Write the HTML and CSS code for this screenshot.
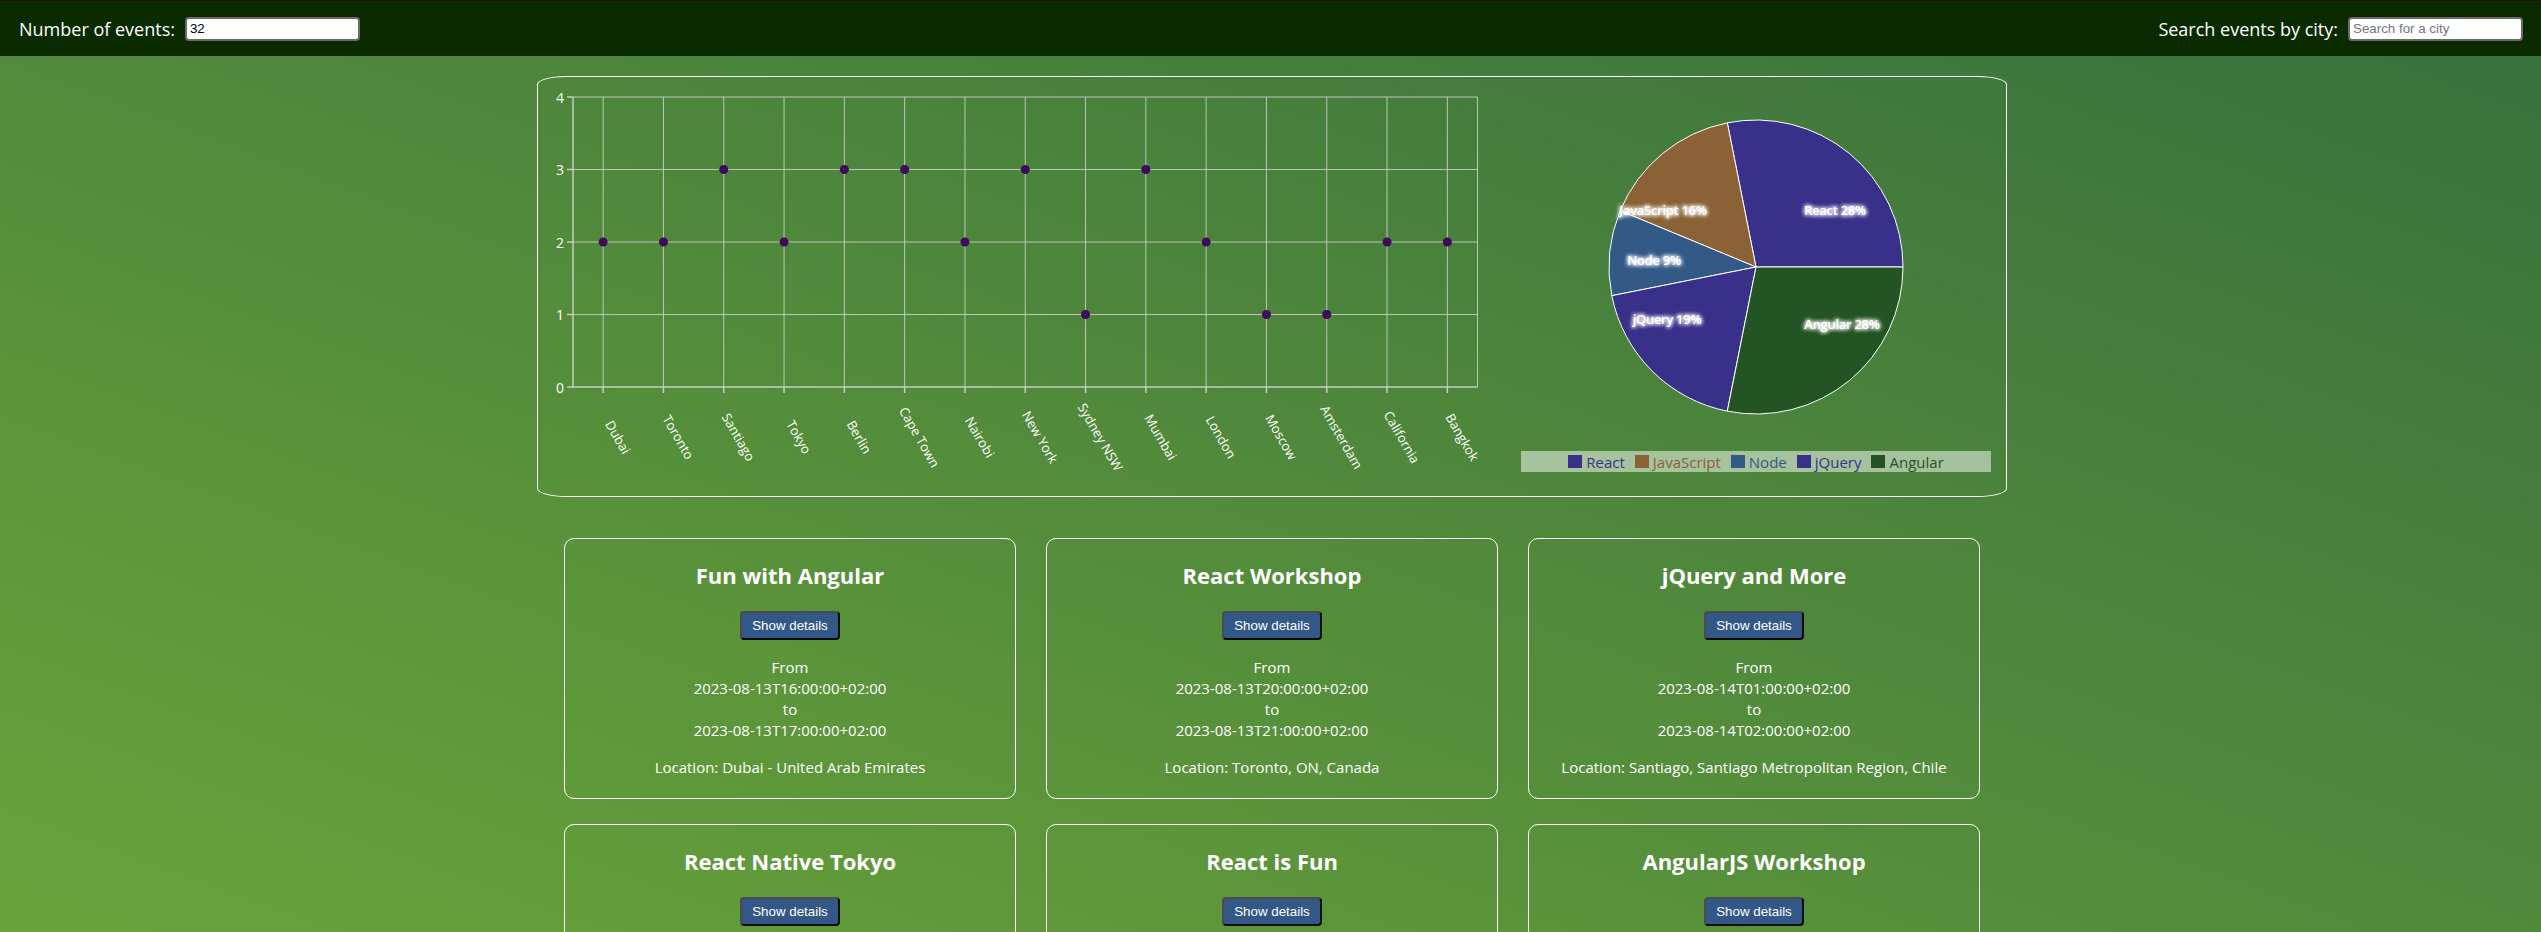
FILE: index.html
```html
<!DOCTYPE html>
<html lang="en">
<head>
<meta charset="utf-8">
<title>Meet App</title>
<link rel="stylesheet" href="styles.css">
</head>
<body>
<header class="topbar">
  <label class="field">
    <span class="field-label">Number of events:</span>
    <input class="field-input num-input" type="text" value="32">
  </label>
  <label class="field">
    <span class="field-label">Search events by city:</span>
    <input class="field-input city-input" type="text" placeholder="Search for a city">
  </label>
</header>

<main class="page">
  <section class="charts">
    <div class="line-wrap">
      <svg class="line-chart" width="970" height="419" viewBox="0 0 970 419">
        <g class="grid">
          <line x1="35" y1="20" x2="939.5" y2="20"/>
          <line x1="35" y1="92.5" x2="939.5" y2="92.5"/>
          <line x1="35" y1="165" x2="939.5" y2="165"/>
          <line x1="35" y1="237.5" x2="939.5" y2="237.5"/>
          <line x1="65.15" y1="20" x2="65.15" y2="310"/>
          <line x1="125.45" y1="20" x2="125.45" y2="310"/>
          <line x1="185.75" y1="20" x2="185.75" y2="310"/>
          <line x1="246.05" y1="20" x2="246.05" y2="310"/>
          <line x1="306.35" y1="20" x2="306.35" y2="310"/>
          <line x1="366.65" y1="20" x2="366.65" y2="310"/>
          <line x1="426.95" y1="20" x2="426.95" y2="310"/>
          <line x1="487.25" y1="20" x2="487.25" y2="310"/>
          <line x1="547.55" y1="20" x2="547.55" y2="310"/>
          <line x1="607.85" y1="20" x2="607.85" y2="310"/>
          <line x1="668.15" y1="20" x2="668.15" y2="310"/>
          <line x1="728.45" y1="20" x2="728.45" y2="310"/>
          <line x1="788.75" y1="20" x2="788.75" y2="310"/>
          <line x1="849.05" y1="20" x2="849.05" y2="310"/>
          <line x1="909.35" y1="20" x2="909.35" y2="310"/>
          <line x1="939.5" y1="20" x2="939.5" y2="310"/>
        </g>
        <g class="axis">
          <line x1="35" y1="20" x2="35" y2="310"/>
          <line x1="35" y1="310" x2="939.5" y2="310"/>
          <line x1="29" y1="20" x2="35" y2="20"/>
          <line x1="29" y1="92.5" x2="35" y2="92.5"/>
          <line x1="29" y1="165" x2="35" y2="165"/>
          <line x1="29" y1="237.5" x2="35" y2="237.5"/>
          <line x1="29" y1="310" x2="35" y2="310"/>
          <line x1="65.15" y1="310" x2="65.15" y2="316"/>
          <line x1="125.45" y1="310" x2="125.45" y2="316"/>
          <line x1="185.75" y1="310" x2="185.75" y2="316"/>
          <line x1="246.05" y1="310" x2="246.05" y2="316"/>
          <line x1="306.35" y1="310" x2="306.35" y2="316"/>
          <line x1="366.65" y1="310" x2="366.65" y2="316"/>
          <line x1="426.95" y1="310" x2="426.95" y2="316"/>
          <line x1="487.25" y1="310" x2="487.25" y2="316"/>
          <line x1="547.55" y1="310" x2="547.55" y2="316"/>
          <line x1="607.85" y1="310" x2="607.85" y2="316"/>
          <line x1="668.15" y1="310" x2="668.15" y2="316"/>
          <line x1="728.45" y1="310" x2="728.45" y2="316"/>
          <line x1="788.75" y1="310" x2="788.75" y2="316"/>
          <line x1="849.05" y1="310" x2="849.05" y2="316"/>
          <line x1="909.35" y1="310" x2="909.35" y2="316"/>
        </g>
        <g class="y-labels">
          <text x="26" y="20">4</text>
          <text x="26" y="92.5">3</text>
          <text x="26" y="165">2</text>
          <text x="26" y="237.5">1</text>
          <text x="26" y="310">0</text>
        </g>
        <g class="x-labels">
          <text x="80.15" y="360" transform="rotate(60 80.15 360)">Dubai</text>
          <text x="140.45" y="360" transform="rotate(60 140.45 360)">Toronto</text>
          <text x="200.75" y="360" transform="rotate(60 200.75 360)">Santiago</text>
          <text x="261.05" y="360" transform="rotate(60 261.05 360)">Tokyo</text>
          <text x="321.35" y="360" transform="rotate(60 321.35 360)">Berlin</text>
          <text x="381.65" y="360" transform="rotate(60 381.65 360)">Cape Town</text>
          <text x="441.95" y="360" transform="rotate(60 441.95 360)">Nairobi</text>
          <text x="502.25" y="360" transform="rotate(60 502.25 360)">New York</text>
          <text x="562.55" y="360" transform="rotate(60 562.55 360)">Sydney NSW</text>
          <text x="622.85" y="360" transform="rotate(60 622.85 360)">Mumbai</text>
          <text x="683.15" y="360" transform="rotate(60 683.15 360)">London</text>
          <text x="743.45" y="360" transform="rotate(60 743.45 360)">Moscow</text>
          <text x="803.75" y="360" transform="rotate(60 803.75 360)">Amsterdam</text>
          <text x="864.05" y="360" transform="rotate(60 864.05 360)">California</text>
          <text x="924.35" y="360" transform="rotate(60 924.35 360)">Bangkok</text>
        </g>
        <g class="dots">
          <circle cx="65.15" cy="165" r="4.5"/>
          <circle cx="125.45" cy="165" r="4.5"/>
          <circle cx="185.75" cy="92.5" r="4.5"/>
          <circle cx="246.05" cy="165" r="4.5"/>
          <circle cx="306.35" cy="92.5" r="4.5"/>
          <circle cx="366.65" cy="92.5" r="4.5"/>
          <circle cx="426.95" cy="165" r="4.5"/>
          <circle cx="487.25" cy="92.5" r="4.5"/>
          <circle cx="547.55" cy="237.5" r="4.5"/>
          <circle cx="607.85" cy="92.5" r="4.5"/>
          <circle cx="668.15" cy="165" r="4.5"/>
          <circle cx="728.45" cy="237.5" r="4.5"/>
          <circle cx="788.75" cy="237.5" r="4.5"/>
          <circle cx="849.05" cy="165" r="4.5"/>
          <circle cx="909.35" cy="165" r="4.5"/>
        </g>
      </svg>
    </div>

    <div class="pie-wrap">
      <svg class="pie-chart" width="470" height="374" viewBox="0 0 470 374">
        <defs>
          <filter id="glow" x="-20%" y="-50%" width="140%" height="200%">
            <feGaussianBlur in="SourceGraphic" stdDeviation="2.2" result="b"/>
            <feMerge>
              <feMergeNode in="b"/>
              <feMergeNode in="b"/>
              <feMergeNode in="b"/>
              <feMergeNode in="SourceGraphic"/>
            </feMerge>
          </filter>
        </defs>
        <g class="slices">
          <path class="s-react" d="M235,190 L382,190 A147,147 0 0 0 206.32,45.82 Z"/>
          <path class="s-js" d="M235,190 L206.32,45.82 A147,147 0 0 0 99.19,133.75 Z"/>
          <path class="s-node" d="M235,190 L99.19,133.75 A147,147 0 0 0 90.82,218.68 Z"/>
          <path class="s-jquery" d="M235,190 L90.82,218.68 A147,147 0 0 0 206.32,334.18 Z"/>
          <path class="s-angular" d="M235,190 L206.32,334.18 A147,147 0 0 0 382,190 Z"/>
        </g>
        <g class="pie-labels" filter="url(#glow)">
          <text x="314" y="133">React 28%</text>
          <text x="142" y="133">JavaScript 16%</text>
          <text x="133" y="183">Node 9%</text>
          <text x="146" y="242">jQuery 19%</text>
          <text x="321" y="247">Angular 28%</text>
        </g>
      </svg>
      <ul class="legend">
        <li class="legend-item c-react"><span class="swatch"></span>React</li>
        <li class="legend-item c-js"><span class="swatch"></span>JavaScript</li>
        <li class="legend-item c-node"><span class="swatch"></span>Node</li>
        <li class="legend-item c-jquery"><span class="swatch"></span>jQuery</li>
        <li class="legend-item c-angular"><span class="swatch"></span>Angular</li>
      </ul>
    </div>
  </section>

  <ul class="events">
    <li class="event">
      <h2 class="event-title">Fun with Angular</h2>
      <button class="details-btn" type="button">Show details</button>
      <p class="event-time">From<br>2023-08-13T16:00:00+02:00<br>to<br>2023-08-13T17:00:00+02:00</p>
      <p class="event-loc">Location: Dubai - United Arab Emirates</p>
    </li>
    <li class="event">
      <h2 class="event-title">React Workshop</h2>
      <button class="details-btn" type="button">Show details</button>
      <p class="event-time">From<br>2023-08-13T20:00:00+02:00<br>to<br>2023-08-13T21:00:00+02:00</p>
      <p class="event-loc">Location: Toronto, ON, Canada</p>
    </li>
    <li class="event">
      <h2 class="event-title">jQuery and More</h2>
      <button class="details-btn" type="button">Show details</button>
      <p class="event-time">From<br>2023-08-14T01:00:00+02:00<br>to<br>2023-08-14T02:00:00+02:00</p>
      <p class="event-loc">Location: Santiago, Santiago Metropolitan Region, Chile</p>
    </li>
    <li class="event">
      <h2 class="event-title">React Native Tokyo</h2>
      <button class="details-btn" type="button">Show details</button>
      <p class="event-time">From<br>2023-08-14T07:00:00+02:00<br>to<br>2023-08-14T08:00:00+02:00</p>
      <p class="event-loc">Location: Tokyo, Japan</p>
    </li>
    <li class="event">
      <h2 class="event-title">React is Fun</h2>
      <button class="details-btn" type="button">Show details</button>
      <p class="event-time">From<br>2023-08-14T09:00:00+02:00<br>to<br>2023-08-14T10:00:00+02:00</p>
      <p class="event-loc">Location: Berlin, Germany</p>
    </li>
    <li class="event">
      <h2 class="event-title">AngularJS Workshop</h2>
      <button class="details-btn" type="button">Show details</button>
      <p class="event-time">From<br>2023-08-14T11:00:00+02:00<br>to<br>2023-08-14T12:00:00+02:00</p>
      <p class="event-loc">Location: Cape Town, South Africa</p>
    </li>
  </ul>
</main>
</body>
</html>
```

FILE: styles.css
```css
html {
  min-height: 100%;
  background: linear-gradient(to top right, #6aa339 0%, #37703d 100%) fixed;
}

body {
  margin: 0;
  font-family: "Open Sans", "Noto Sans", sans-serif;
  color: #fff;
}

.topbar {
  box-sizing: border-box;
  height: 56px;
  border-top: 1px solid #2a0c00;
  background: #0a2a00;
  display: flex;
  align-items: center;
  justify-content: space-between;
  padding: 0 18px 0 19px;
}

.field {
  display: flex;
  align-items: center;
  gap: 10px;
}

.field-label {
  font-size: 18px;
  color: #fff;
}

.field-input {
  box-sizing: border-box;
  height: 24px;
  border: 2px solid #6b6b6b;
  border-radius: 4px;
  background: #fff;
  padding: 0 3px;
  font-family: "Liberation Sans", Arial, sans-serif;
  font-size: 13.33px;
  color: #000;
}

.field-input::placeholder {
  color: #757575;
}

.num-input {
  width: 175px;
}

.city-input {
  width: 175px;
}

.page {
  padding: 20px 0 40px 3px;
}

.charts {
  box-sizing: border-box;
  width: 1470px;
  height: 421px;
  margin: 0 auto;
  border: 1px solid #fff;
  border-radius: 2%;
  display: flex;
  gap: 13px;
  padding-right: 15px;
}

.line-chart,
.pie-chart {
  display: block;
}

.grid line {
  stroke: #cfd3cb;
  stroke-width: 1;
  opacity: 0.85;
}

.axis line {
  stroke: #d2d6ce;
  stroke-width: 1.5;
  opacity: 0.9;
}

.y-labels text {
  fill: #fff;
  font-size: 14px;
  text-anchor: end;
  dominant-baseline: central;
}

.x-labels text {
  fill: #fff;
  font-size: 13px;
  text-anchor: middle;
  dominant-baseline: central;
}

.dots circle {
  fill: #42085f;
}

.slices path {
  stroke: #fff;
  stroke-width: 1;
}

.s-react,
.s-jquery {
  fill: #39308a;
}

.s-js {
  fill: #8a6236;
}

.s-node {
  fill: #335987;
}

.s-angular {
  fill: #245424;
}

.pie-labels text {
  fill: #fff;
  font-size: 13px;
  font-weight: 600;
  text-anchor: middle;
  dominant-baseline: central;
  letter-spacing: -0.3px;
}

.pie-wrap {
  width: 470px;
  display: flex;
  flex-direction: column;
}

.legend {
  list-style: none;
  margin: 0;
  padding: 0;
  height: 21px;
  background: rgba(255, 255, 255, 0.5);
  display: flex;
  align-items: center;
  justify-content: center;
  gap: 10px;
  font-size: 15px;
}

.legend-item {
  display: flex;
  align-items: center;
  gap: 4px;
}

.swatch {
  width: 14px;
  height: 13px;
  background: currentColor;
}

.c-react,
.c-jquery {
  color: #39308a;
}

.c-js {
  color: #8a6236;
}

.c-node {
  color: #335987;
}

.c-angular {
  color: #245424;
}

.events {
  list-style: none;
  margin: 41px 0 0;
  padding: 0;
  display: grid;
  grid-template-columns: repeat(3, 452px);
  column-gap: 30px;
  row-gap: 25px;
  justify-content: center;
}

.event {
  border: 1px solid #fff;
  border-radius: 10px;
  text-align: center;
  color: #fff;
}

.event-title {
  margin: 20px 0;
  font-size: 22px;
  line-height: 32px;
  font-weight: 700;
}

.details-btn {
  box-sizing: border-box;
  height: 29px;
  padding: 0 10px;
  border: 2px solid #4b4b4b;
  border-right-color: #0d0d0d;
  border-bottom-color: #0d0d0d;
  border-radius: 4px;
  background: #335887;
  color: #fff;
  font-family: "Liberation Sans", Arial, sans-serif;
  font-size: 13.33px;
}

.event-time {
  margin: 17px 0 0;
  font-size: 15px;
  line-height: 21px;
}

.event-loc {
  margin: 16px 0 20px;
  font-size: 15px;
  line-height: 21px;
}
```
